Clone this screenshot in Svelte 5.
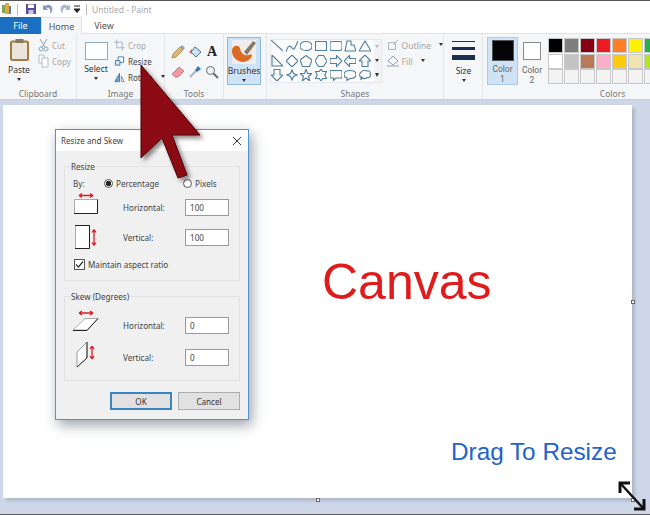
<script>
	const row1 = ['#000000', '#7f7f7f', '#880015', '#ed1c24', '#ff7f27', '#fff200', '#22b14c'];
	const row2 = ['#ffffff', '#c3c3c3', '#b97a57', '#ffaec9', '#ffc90e', '#efe4b0', '#b5e61d'];
	const row3 = ['', '', '', '', '', '', ''];

	const shapes = [
		'M0 0 12 11',
		'M0 12C2 5 4 5 6 8S9 8 12 1',
		'M6 1.500C10 1.500 12 3.500 12 6S10 10.500 6 10.500 0 8.500 0 6 2 1.500 6 1.500Z',
		'M.5 1.500H11.500V10.500H.5Z',
		'M2 1.500H10Q12 1.500 12 3.500V8.500Q12 10.500 10 10.500H2Q0 10.500 0 8.500V3.500Q0 1.500 2 1.500Z',
		'M1 11 3 1H7L7 5H10L12 11Z',
		'M6 1 12 11H0Z',
		'M1 0V11H12Z',
		'M6 0 12 6 6 12 0 6Z',
		'M6 .5 12 5 9.500 11.500H2.500L0 5Z',
		'M3.500 .5H8.500L12 6 8.500 11.500H3.500L0 6Z',
		'M0 3.500H6.500V.5L12 6 6.500 11.500V8.500H0Z',
		'M12 3.500H5.500V.5L0 6 5.500 11.500V8.500H12Z',
		'M6 0 12 6H9V11.500H3V6H0Z',
		'M3 .5H9V6H12L6 12 0 6H3Z',
		'M6 1 7.500 4.500 11 6 7.500 7.500 6 11 4.500 7.500 1 6 4.500 4.500Z',
		'M6 0 7.500 4.500H12L8.500 7.200 9.800 12 6 9 2.200 12 3.500 7.200 0 4.500H4.500Z',
		'M6 0 7.700 2.500 11.500 2.500 9.800 6 11.500 9.500 7.700 9.500 6 12 4.300 9.500 .5 9.500 2.200 6 .5 2.500 4.300 2.500Z',
		'M1 1.500H11Q12 1.500 12 2.500V8Q12 9 11 9H6L3.500 11.500V9H1Q0 9 0 8V2.500Q0 1.500 1 1.500Z',
		'M6 1.500C10 1.500 12 3.200 12 5.500S10 9.500 6 9.500L3 11.500V9C1 8.500 0 7 0 5.500 0 3.200 2 1.500 6 1.500Z',
		'M3 2.500C4 1 7 1 8 2 10 1 12 3 11 5 12.500 7 10 9.500 8 8.500 6 10 4 9.500 3 8.500L2 11 2 8C0 7.500 0 3.500 3 2.500Z'
	];

	const dialogRows = [
		{ label: 'Horizontal:', value: '100', icon: 'h' },
		{ label: 'Vertical:', value: '100', icon: 'v' }
	];
	const skewRows = [
		{ label: 'Horizontal:', value: '0', icon: 'sh' },
		{ label: 'Vertical:', value: '0', icon: 'sv' }
	];
</script>

{#snippet rowIcon(kind)}
	<svg class="row-icon" width="34" height="32" viewBox="0 0 34 32">
		{#if kind === 'h'}
			<path d="M6 3.500H20M6 3.500l3-2M6 3.500l3 2M20 3.500l-3-2M20 3.500l-3 2" stroke="#e01b24" stroke-width="1.300" fill="none" />
			<path d="M1.500 7.500H24.500V21.500H1.500Z" fill="#fff" stroke="#aaa" />
			<path d="M1 21.500H24.500V7.500" stroke="#222" fill="none" />
		{:else if kind === 'v'}
			<path d="M2.500 3.500H16.500V26.500H2.500Z" fill="#fff" stroke="#aaa" />
			<path d="M2 26.500H16.500V3.500H2" stroke="#222" fill="none" />
			<path d="M21 7.500V23.500M21 7.500l-2 3M21 7.500l2 3M21 23.500l-2-3M21 23.500l2-3" stroke="#e01b24" stroke-width="1.300" fill="none" />
		{:else if kind === 'sh'}
			<path d="M6 4H20M6 4l3-2M6 4l3 2M20 4l-3-2M20 4l-3 2" stroke="#e01b24" stroke-width="1.300" fill="none" />
			<path d="M12 9.500H25L14 21H0Z" fill="#fff" stroke="#aaa" />
			<path d="M0 21.500H14L25 9.500" stroke="#222" fill="none" />
		{:else}
			<path d="M4 11 14 1V17L4 26Z" fill="#fff" stroke="#999" />
			<path d="M4 26 14 17V1" stroke="#333" fill="none" />
			<path d="M19 5V18M19 5l-2 3M19 5l2 3M19 18l-2-3M19 18l2-3" stroke="#e01b24" stroke-width="1.300" fill="none" />
		{/if}
	</svg>
{/snippet}

<div class="paint">
	<header class="titlebar">
		<svg class="app-icon" width="10" height="12" viewBox="0 0 10 12">
			<rect x="0" y="2" width="3" height="8" fill="#7ea65a" />
			<rect x="3" y="0" width="4" height="11" fill="#e3a93c" />
			<rect x="7" y="3" width="2" height="8" fill="#4d7fb5" />
		</svg>
		<span class="bar first"></span>
		<svg width="12" height="12" viewBox="0 0 12 12">
			<path d="M1 1H11V11H1Z" fill="#5c4a9c" />
			<rect x="3" y="1.500" width="6" height="3.500" fill="#fff" />
			<rect x="3.500" y="7" width="5" height="4" fill="#c9c2e4" />
		</svg>
		<svg width="12" height="12" viewBox="0 0 12 12">
			<path d="M3 3C6 .5 10 2 10.500 6 10.500 8 9.500 9.500 8 10.500 9 7 7 4 4.500 5L6 7H1V2Z" fill="#8a9cc0" />
		</svg>
		<svg width="12" height="12" viewBox="0 0 12 12">
			<path d="M9 3C6 .5 2 2 1.500 6 1.500 8 2.500 9.500 4 10.500 3 7 5 4 7.500 5L6 7H11V2Z" fill="#a9b5c9" />
		</svg>
		<svg class="qat-more" width="8" height="10" viewBox="0 0 8 10">
			<path d="M1 2H7M1 5H7L4 8.500Z" stroke="#222" fill="#222" />
		</svg>
		<span class="bar"></span>
		<span class="doc-title">Untitled - Paint</span>
	</header>

	<nav class="tabs">
		<span class="tab file">File</span>
		<span class="tab home">Home</span>
		<span class="tab view">View</span>
		<span class="tab-rest"></span>
	</nav>

	<section class="ribbon">
		<div class="group clipboard">
			<div class="group-body">
				<div class="big-tool">
					<svg width="19" height="22" viewBox="0 0 19 22">
						<rect x="1" y="2.500" width="17" height="18.500" rx="1.500" fill="#e8e4da" stroke="#a3793f" stroke-width="2" />
						<rect x="5.500" y="0" width="8" height="4" fill="#8a7658" />
					</svg>
					<span>Paste</span>
					<i class="caret"></i>
				</div>
				<div class="small-tools">
					<span class="small muted">
						<svg width="11" height="14" viewBox="0 0 11 14"><path d="M2 1 7 9M9 1 4 9" stroke="#8ea2b5" fill="none" /><circle cx="3" cy="11" r="2" fill="none" stroke="#8ea2b5" /><circle cx="8" cy="11" r="2" fill="none" stroke="#8ea2b5" /></svg>
						Cut
					</span>
					<span class="small muted">
						<svg width="11" height="14" viewBox="0 0 11 14"><path d="M1 1H6V9H1Z" fill="#fff" stroke="#b4bcc6" /><path d="M4 4H10V13H4Z" fill="#fff" stroke="#b4bcc6" /></svg>
						Copy
					</span>
				</div>
			</div>
			<span class="group-label">Clipboard</span>
		</div>

		<div class="group image">
			<div class="group-body">
				<div class="big-tool select">
					<span class="select-box"></span>
					<span>Select</span>
					<i class="caret"></i>
				</div>
				<div class="small-tools">
					<span class="small muted">
						<svg width="11" height="12" viewBox="0 0 12 12"><path d="M3 0V9H12M0 3H9V12" stroke="#9fb2c4" fill="none" /></svg>
						Crop
					</span>
					<span class="small">
						<svg width="11" height="12" viewBox="0 0 12 12"><path d="M4.500 1.500H10.500V7.500H4.500Z" fill="#fff" stroke="#3c78a8" /><path d="M1.500 5.500H6.500V10.500H1.500Z" fill="#d8e7f3" stroke="#3c78a8" /></svg>
						Resize
					</span>
					<span class="small">
						<svg width="11" height="12" viewBox="0 0 12 12"><path d="M1 11 6 2V11Z" fill="#6fa8d6" stroke="#3c78a8" /><path d="M8 5 11 11H8Z" fill="#fff" stroke="#888" /></svg>
						Rotate
						<i class="caret side"></i>
					</span>
				</div>
			</div>
			<span class="group-label">Image</span>
		</div>

		<div class="group tools">
			<div class="group-body tool-grid">
				<svg width="14" height="14" viewBox="0 0 14 14"><path d="M1 13 2 9 9 2 12 5 5 12Z" fill="#dcb874" stroke="#b0915a" /><path d="M9 2 11 0 14 3 12 5Z" fill="#8fa3b5" /></svg>
				<svg width="14" height="14" viewBox="0 0 14 14"><path d="M7 2 13 7 8 12 3 7Z" fill="#cfe0ef" stroke="#45709a" /><path d="M1 7 4 4V9Z" fill="#d9584f" /></svg>
				<span class="tool-a">A</span>
				<svg width="14" height="14" viewBox="0 0 14 14"><path d="M1 9 8 2 13 6 7 12H4Z" fill="#ee9aa0" stroke="#cf7a80" /></svg>
				<svg width="14" height="14" viewBox="0 0 14 14"><path d="M2 12 8 6" stroke="#a7b4bf" stroke-width="2" /><path d="M7 5 10 1 13 4 9 7Z" fill="#3c78a8" /></svg>
				<svg width="14" height="14" viewBox="0 0 14 14"><circle cx="5.500" cy="5.500" r="4" fill="#eef3f8" stroke="#5b6e80" /><path d="M8.500 8.500 13 13" stroke="#5b6e80" stroke-width="2" /></svg>
			</div>
			<span class="group-label">Tools</span>
		</div>

		<div class="group brushes">
			<div class="group-body">
				<div class="brush-btn">
					<svg width="24" height="24" viewBox="0 0 24 24">
						<rect width="24" height="24" fill="#eeeeee" />
						<path d="M0 11C0 19 8 24 15 21 19 19 21 16 19 14 15 17 9 15 8 8 6 4 0 6 0 11Z" fill="#dc6a24" />
						<path d="M15 15 24 3 21 1 12 12Z" fill="#8c7a68" />
					</svg>
					<span>Brushes</span>
					<i class="caret"></i>
				</div>
			</div>
		</div>

		<div class="group shapes">
			<div class="group-body shapes-body">
				<div class="gallery">
					<div class="shape-grid">
						{#each shapes as d}
							<svg width="12" height="12" viewBox="0 0 12 12">
								<path {d} fill="none" stroke="#4f7f9f" stroke-width="1.100" />
							</svg>
						{/each}
					</div>
					<div class="gallery-scroll">
						<i class="caret up"></i>
						<i class="caret"></i>
						<i class="caret more"></i>
					</div>
				</div>
				<div class="small-tools shape-opts">
					<span class="small muted">
						<svg width="12" height="12" viewBox="0 0 12 12"><path d="M1.500 3.500H8.500V10.500H1.500Z" fill="none" stroke="#a8b6c4" /><path d="M6 6 11 1" stroke="#a8b6c4" /></svg>
						Outline
						<i class="caret side"></i>
					</span>
					<span class="small muted">
						<svg width="12" height="12" viewBox="0 0 12 12"><path d="M6 1 11 6 6 10 1 6Z" fill="none" stroke="#8ea2b5" /><path d="M0 11H12" stroke="#8ea2b5" /></svg>
						Fill
						<i class="caret side"></i>
					</span>
				</div>
			</div>
			<span class="group-label">Shapes</span>
		</div>

		<div class="group size">
			<div class="group-body">
				<div class="big-tool size-tool">
					<span class="lines"><b class="l1"></b><b class="l2"></b><b class="l3"></b></span>
					<span class="size-label">Size</span>
					<i class="caret"></i>
				</div>
			</div>
		</div>

		<div class="group colors">
			<div class="group-body colors-body">
				<div class="color-btn active">
					<span class="color-swatch one"></span>
					<span>Color<br />1</span>
				</div>
				<div class="color-btn second">
					<span class="color-swatch two"></span>
					<span>Color<br />2</span>
				</div>
				<div class="palette">
					{#each [row1, row2, row3] as row}
						<div class="palette-row">
							{#each row as c}
								<span class="cell" class:empty={!c} style:background={c || null}></span>
							{/each}
						</div>
					{/each}
				</div>
			</div>
			<span class="group-label colors-label">Colors</span>
		</div>
	</section>

	<main class="workspace">
		<div class="canvas">
			<span class="canvas-word">Canvas</span>
			<span class="drag-word">Drag To Resize</span>
			<span class="handle right"></span>
			<span class="handle bottom"></span>
			<span class="handle corner"></span>

			<div class="dialog">
				<div class="dialog-title">
					<span>Resize and Skew</span>
					<svg width="10" height="10" viewBox="0 0 10 10"><path d="M1 1 9 9M9 1 1 9" stroke="#333" fill="none" /></svg>
				</div>
				<div class="dialog-body">
					<fieldset class="resize-set">
						<legend>Resize</legend>
						<div class="by-row">
							<span class="by">By:</span>
							<span class="radio on"></span><span>Percentage</span>
							<span class="radio pixels"></span><span>Pixels</span>
						</div>
						{#each dialogRows as row}
							<div class="field-row">
								{@render rowIcon(row.icon)}
								<span class="field-label">{row.label}</span>
								<span class="input">{row.value}</span>
							</div>
						{/each}
						<div class="check-row">
							<span class="check">
								<svg width="9" height="9" viewBox="0 0 9 9"><path d="M1 4.500 3.500 7 8 1.500" stroke="#333" stroke-width="1.200" fill="none" /></svg>
							</span>
							Maintain aspect ratio
						</div>
					</fieldset>
					<fieldset class="skew-set">
						<legend>Skew (Degrees)</legend>
						{#each skewRows as row}
							<div class="field-row">
								{@render rowIcon(row.icon)}
								<span class="field-label">{row.label}</span>
								<span class="input">{row.value}</span>
							</div>
						{/each}
					</fieldset>
					<div class="buttons">
						<span class="btn default">OK</span>
						<span class="btn">Cancel</span>
					</div>
				</div>
			</div>
		</div>

		<svg class="big-arrow" width="90" height="135" viewBox="0 0 90 135">
			<path d="M5 1V94L26 74 42 114 51 111 36 71H64Z" fill="#8b0a14" stroke="#4a0309" />
		</svg>

		<svg class="resize-arrow" width="32" height="34" viewBox="0 0 32 34">
			<path d="M5 5 27 29" stroke="#111" stroke-width="2.500" />
			<path d="M4 14V4H14" stroke="#111" stroke-width="3" fill="none" />
			<path d="M28 20V30H18" stroke="#111" stroke-width="3" fill="none" />
		</svg>
	</main>
</div>

<style>
	:global(body) {
		margin: 0;
	}

	.paint {
		position: relative;
		width: 650px;
		height: 515px;
		overflow: hidden;
		background: #fff;
		font-family: 'Noto Sans', 'Open Sans', sans-serif;
		font-size: 8.500px;
		color: #555;
		border-top: 1px solid #555;
		box-sizing: border-box;
	}

	.titlebar {
		display: flex;
		align-items: center;
		gap: 5px;
		height: 16px;
		padding-left: 2px;
	}

	.bar {
		width: 1px;
		height: 11px;
		background: #bbb;
	}

	.bar.first {
		margin-right: 2px;
	}

	.qat-more {
		margin-left: -3px;
	}

	.doc-title {
		color: #aaa;
		font-size: 8.500px;
	}

	.tabs {
		display: flex;
		height: 17px;
	}

	.tab {
		display: flex;
		align-items: center;
		justify-content: center;
		font-size: 9px;
		box-sizing: border-box;
	}

	.file {
		width: 41px;
		background: #1b6fc0;
		color: #fff;
	}

	.home {
		width: 41px;
		background: #f5f6f7;
		border: 1px solid #dfe2e6;
		border-bottom: none;
	}

	.view {
		width: 44px;
		border-bottom: 1px solid #dfe2e6;
	}

	.tab-rest {
		flex: 1;
		border-bottom: 1px solid #dfe2e6;
	}

	.ribbon {
		display: flex;
		height: 66px;
		background: #f5f6f7;
		border-bottom: 1px solid #c5cedb;
		box-sizing: border-box;
	}

	.group {
		display: flex;
		flex-direction: column;
		flex: none;
		box-sizing: border-box;
		border-right: 1px solid #e4e6e9;
		height: 65px;
	}

	.group-body {
		display: flex;
		height: 55px;
		padding-top: 3px;
		box-sizing: border-box;
	}

	.group-label {
		text-align: center;
		color: #777;
		line-height: 10px;
	}

	.clipboard { width: 77px; }
	.image { width: 88px; }
	.tools { width: 59px; }
	.brushes { width: 43px; }
	.shapes { width: 177px; }
	.size { width: 39px; }
	.colors { flex: 1; border-right: none; min-width: 167px; }

	.big-tool {
		display: flex;
		flex-direction: column;
		align-items: center;
		width: 38px;
		flex: none;
		color: #333;
	}

	.clipboard .big-tool svg {
		margin-top: 2px;
	}

	.big-tool span {
		margin-top: 3px;
		line-height: 11px;
	}

	.caret {
		display: block;
		width: 0;
		height: 0;
		margin-top: 3px;
		border: 2px solid transparent;
		border-top: 3px solid #333;
		border-bottom: none;
	}

	.caret.side {
		display: inline-block;
		margin: 0 0 1px 5px;
	}

	.small-tools {
		display: flex;
		flex-direction: column;
		gap: 2px;
		padding-top: 1px;
	}

	.small {
		display: flex;
		align-items: center;
		gap: 3px;
		height: 14px;
		color: #444;
		font-size: 8px;
		white-space: nowrap;
	}

	.muted {
		color: #a5a5a5;
	}

	.image .big-tool {
		width: 36px;
		margin-left: 1px;
	}

	.big-tool .select-box {
		display: block;
		box-sizing: border-box;
		width: 23px;
		height: 18px;
		margin-top: 5px;
		background: #fff;
		border: 1px solid #8eaac4;
	}

	.tool-grid {
		display: grid;
		grid-template-columns: repeat(3, 14px);
		grid-auto-rows: 16px;
		gap: 4px 3px;
		padding: 11px 0 0 6px;
		align-content: start;
	}

	.tool-a {
		font-family: 'Liberation Serif', serif;
		font-weight: bold;
		font-size: 14px;
		line-height: 14px;
		color: #222;
		text-align: center;
	}

	.brush-btn {
		display: flex;
		flex-direction: column;
		align-items: center;
		width: 34px;
		height: 48px;
		margin-left: 3px;
		padding-top: 2px;
		box-sizing: border-box;
		background: #cfe3f6;
		border: 1px solid #8fb8dc;
		color: #333;
	}

	.brush-btn span {
		margin-top: 1px;
		line-height: 11px;
	}

	.shapes-body {
		gap: 5px;
		padding-left: 3px;
	}

	.gallery {
		display: flex;
		width: 114px;
		height: 44px;
		margin-top: 2px;
		background: #fbfbfb;
		border: 1px solid #e6e8ea;
		box-sizing: border-box;
	}

	.shape-grid {
		display: grid;
		grid-template-columns: repeat(7, 12px);
		grid-auto-rows: 12px;
		gap: 2.500px 2.700px;
		width: 103px;
	}

	.gallery-scroll {
		display: flex;
		flex-direction: column;
		align-items: center;
		justify-content: space-around;
		flex: 1;
		background: #f2f3f4;
	}

	.gallery-scroll .caret {
		margin: 0;
	}

	.caret.up {
		opacity: 0.3;
	}

	.caret.more {
		border-top-width: 4px;
	}

	.shape-opts .small {
		font-size: 8.500px;
	}

	.size-tool {
		width: 39px;
	}

	.big-tool .lines {
		display: flex;
		flex-direction: column;
		margin-top: 4px;
		gap: 5px;
		width: 23px;
	}

	.lines b {
		display: block;
		background: #1d2f4f;
	}

	.l1 { height: 1px; }
	.l2 { height: 3px; }
	.l3 { height: 5px; }

	.big-tool .size-label {
		margin-top: 5px;
	}

	.colors-body {
		padding-left: 4px;
	}

	.color-btn {
		display: flex;
		flex-direction: column;
		align-items: center;
		width: 31px;
		height: 48px;
		flex: none;
		text-align: center;
		font-family: Roboto, 'Noto Sans', sans-serif;
		line-height: 10px;
		box-sizing: border-box;
		padding-top: 3px;
		margin-right: 2px;
		color: #666;
	}

	.color-btn.second {
		width: 26px;
	}

	.color-btn.active {
		background: #cfe3f6;
		border: 1px solid #a9cbe8;
		padding-top: 2px;
		margin-right: 1px;
	}

	.color-swatch {
		display: block;
		box-sizing: border-box;
	}

	.color-swatch.one {
		width: 22px;
		height: 22px;
		background: #050509;
		border: 1px solid #555;
		margin-bottom: 3px;
	}

	.color-swatch.two {
		width: 18px;
		height: 18px;
		margin: 2px 0 5px;
		background: #fff;
		border: 1px solid #8a8a8a;
	}

	.palette {
		display: flex;
		flex-direction: column;
		gap: 2.500px;
		margin: 2px 0 0 2px;
	}

	.palette-row {
		display: flex;
		gap: 3px;
	}

	.cell {
		display: block;
		flex: none;
		width: 13px;
		height: 13px;
		outline: 1px solid #c8c8c8;
	}

	.cell.empty {
		background: #f3f3f3;
	}

	.colors-label {
		padding-left: 92px;
	}

	.workspace {
		position: relative;
		height: 415px;
		background: #cdd7e7;
		border-bottom: 1px solid #555;
		box-sizing: border-box;
		padding: 5px 0 0 3px;
	}

	.canvas {
		position: relative;
		width: 629px;
		height: 393px;
		background: #fff;
		box-shadow: 3px 3px 3px #b0b8c8;
	}

	.canvas-word {
		position: absolute;
		left: 319px;
		top: 148px;
		font-family: 'Liberation Sans', Arial, sans-serif;
		font-size: 50px;
		line-height: 58px;
		color: #e01b1b;
	}

	.drag-word {
		position: absolute;
		left: 448px;
		top: 333px;
		font-family: 'Liberation Sans', Arial, sans-serif;
		font-size: 24.300px;
		line-height: 28px;
		color: #2462cc;
		white-space: nowrap;
	}

	.handle {
		position: absolute;
		width: 4px;
		height: 4px;
		background: #fff;
		border: 1px solid #666;
		box-sizing: border-box;
	}

	.handle.right { left: 628px; top: 195px; }
	.handle.bottom { left: 313px; top: 393px; }
	.handle.corner { left: 628px; top: 393px; }

	.dialog {
		position: absolute;
		left: 52px;
		top: 24px;
		width: 194px;
		height: 291px;
		background: #f0f0f0;
		border: 1px solid #4f93cf;
		box-sizing: border-box;
		box-shadow: 3px 5px 12px rgba(60, 70, 90, 0.5);
		color: #444;
		font-size: 8.100px;
	}

	.dialog-title {
		display: flex;
		align-items: center;
		justify-content: space-between;
		height: 21px;
		padding: 0 6px 0 5px;
		background: #fff;
		color: #444;
	}

	.dialog-body {
		display: flex;
		flex-direction: column;
		padding: 10px 8px 0;
	}

	fieldset {
		margin: 0;
		padding: 0 0 0 8px;
		border: 1px solid #e2e2e2;
		min-width: 0;
		box-sizing: border-box;
	}

	legend {
		padding: 0;
		margin-left: -2px;
		line-height: 11px;
	}

	.resize-set {
		height: 120px;
	}

	.skew-set {
		height: 90px;
		margin-top: 10px;
		padding-top: 7px;
	}

	.by-row {
		display: flex;
		align-items: center;
		height: 13px;
		margin: 5px 0 2.500px;
		gap: 3px;
	}

	.by {
		width: 28px;
	}

	.radio {
		position: relative;
		width: 9px;
		height: 9px;
		border: 1px solid #555;
		border-radius: 50%;
		background: #fff;
		box-sizing: border-box;
	}

	.radio.on {
		background: radial-gradient(circle, #222 0 2.500px, #fff 3px);
	}

	.radio.pixels {
		margin-left: 21px;
	}

	.field-row {
		display: flex;
		align-items: center;
		height: 30px;
	}

	.row-icon {
		flex: none;
		margin-right: 16px;
	}

	.skew-set .field-row {
		height: 32px;
	}

	.field-label {
		width: 62px;
		flex: none;
	}

	.input {
		flex: none;
		width: 44px;
		height: 17px;
		padding-left: 4px;
		line-height: 15px;
		box-sizing: border-box;
		background: #fff;
		border: 1px solid #9a9a9a;
	}

	.check-row {
		display: flex;
		align-items: center;
		gap: 3px;
		margin: 6px 0 0 1px;
	}

	.check {
		display: flex;
		align-items: center;
		justify-content: center;
		width: 9px;
		height: 9px;
		background: #fff;
		border: 1px solid #555;
	}

	.buttons {
		display: flex;
		justify-content: flex-end;
		gap: 6px;
		margin-top: 11px;
	}

	.btn {
		display: flex;
		align-items: center;
		justify-content: center;
		width: 62px;
		height: 18px;
		background: #e1e1e1;
		border: 1px solid #adadad;
		box-sizing: border-box;
		color: #333;
	}

	.btn.default {
		border: 2px solid #3a85c0;
	}

	.big-arrow {
		position: absolute;
		left: 136px;
		top: -36px;
		filter: drop-shadow(3px 3px 2px rgba(40, 20, 20, 0.5));
	}

	.resize-arrow {
		position: absolute;
		left: 616px;
		top: 379px;
	}
</style>
